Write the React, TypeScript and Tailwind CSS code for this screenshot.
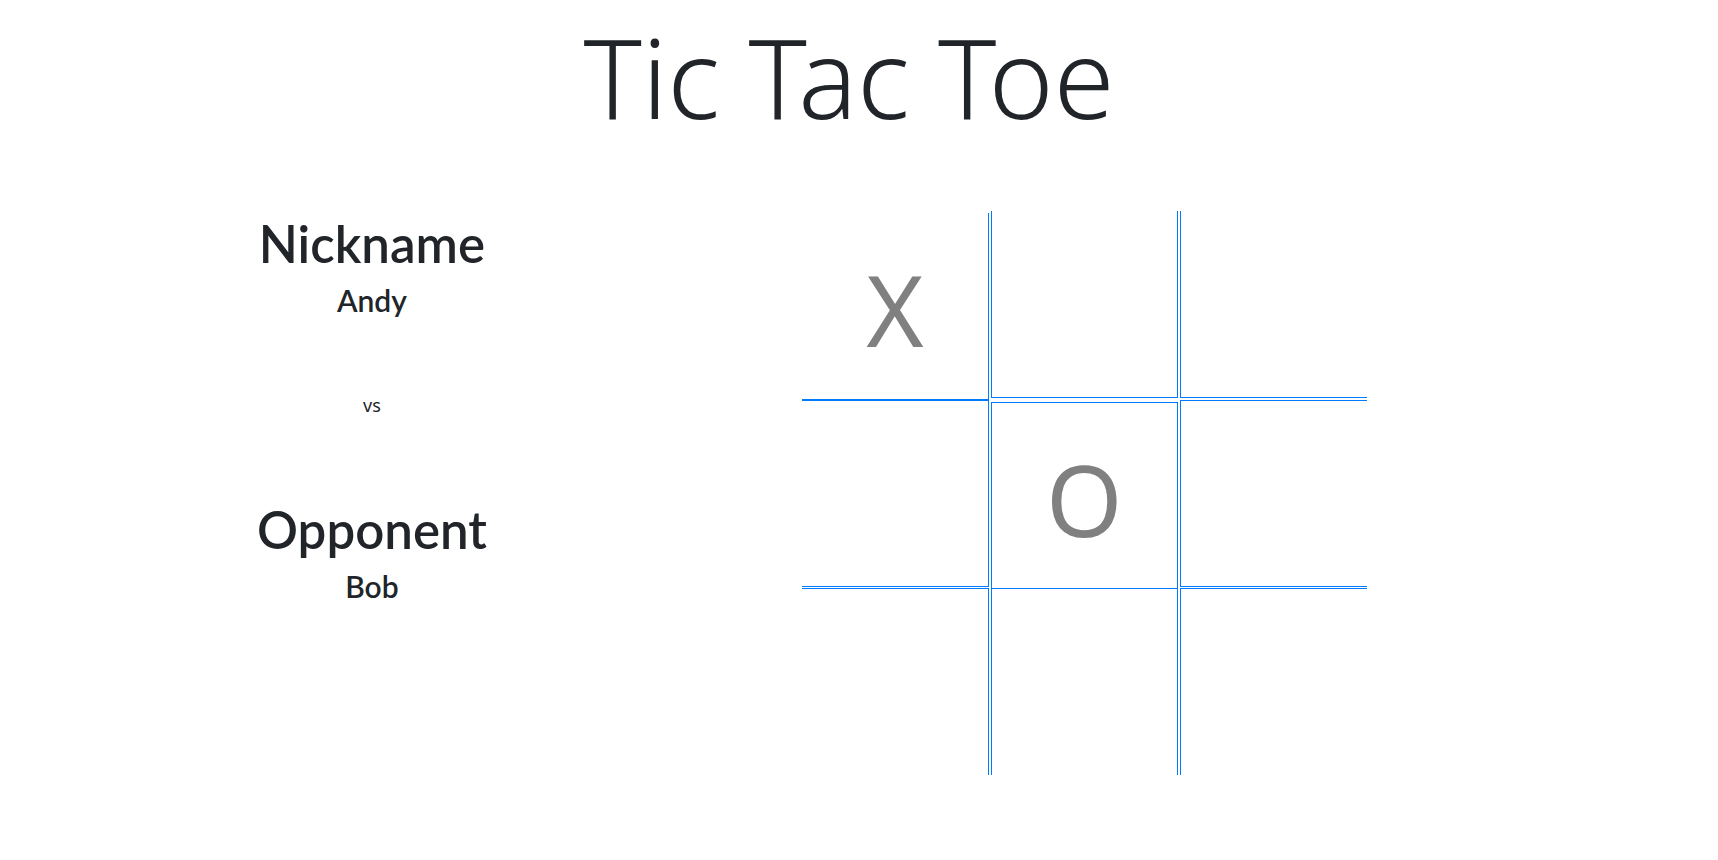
import { useState } from "react";

type Mark = "X" | "O" | null;

const start: Mark[] = ["X", null, null, null, "O", null, null, null, null];

// Borders of each square, so that together they draw the grid lines.
const edges = [
  "border-r border-b",
  "border-x border-b",
  "border-l border-b",
  "border-r border-y",
  "border",
  "border-l border-y",
  "border-r border-t",
  "border-x border-t",
  "border-l border-t",
];

function Player({ role, name }: { role: string; name: string }) {
  return (
    <section className="font-['Lato',sans-serif] font-semibold">
      <h2 className="text-[51px] leading-[60px]">{role}</h2>
      <h3 className="mt-1.5 text-[30px] leading-10">{name}</h3>
    </section>
  );
}

function Board() {
  const [squares, setSquares] = useState<Mark[]>(start);

  const play = (index: number) => {
    if (squares[index]) return;
    const turn: Mark = squares.filter(Boolean).length % 2 === 0 ? "X" : "O";
    setSquares(squares.map((mark, i) => (i === index ? turn : mark)));
  };

  return (
    <div className="grid grid-cols-[repeat(3,187px)] grid-rows-[189px_188px_187px] gap-x-0.5">
      {squares.map((mark, i) => (
        <button
          key={i}
          type="button"
          aria-label={`Square ${i + 1}${mark ? `, ${mark}` : ""}`}
          onClick={() => play(i)}
          className={`h-[187px] border-[#007bff] pt-1.5 text-[98px] leading-none text-[#808080] ${edges[i]} ${mark ? "mt-0.5" : ""}`}
        >
          {mark}
        </button>
      ))}
    </div>
  );
}

export default function App() {
  return (
    <main className="min-h-screen bg-white pb-20 font-['Noto_Sans','Open_Sans',sans-serif] text-[#212529]">
      <h1 className="pr-5 text-center text-[110px] leading-[152px] font-light">Tic Tac Toe</h1>
      <div className="mt-[59px] flex items-start">
        <div className="w-[43.3%] pt-[3px] text-center">
          <Player role="Nickname" name="Andy" />
          <p className="mt-[73px] mb-[83px] text-lg leading-6">vs</p>
          <Player role="Opponent" name="Bob" />
        </div>
        <div className="ml-[58px]">
          <Board />
        </div>
      </div>
    </main>
  );
}
